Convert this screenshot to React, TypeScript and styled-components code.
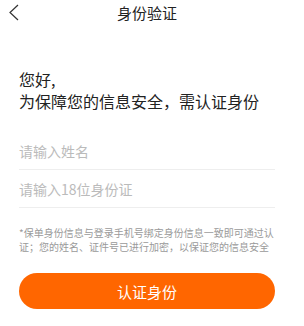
import styled, { createGlobalStyle } from "styled-components";

const GlobalStyle = createGlobalStyle`
  html, body {
    margin: 0;
    padding: 0;
    background: #fff;
  }
  body {
    font-family: "Noto Sans CJK SC", "Noto Sans", sans-serif;
  }
`;

const Page = styled.div`
  width: 294px;
  display: flex;
  flex-direction: column;
`;

const Header = styled.div`
  position: relative;
  height: 25px;
  display: flex;
  align-items: center;
  justify-content: center;
`;

const BackButton = styled.div`
  position: absolute;
  left: 8px;
  top: 4px;
  width: 12px;
  height: 18px;
  display: flex;
`;

const Title = styled.div`
  font-size: 15px;
  line-height: 25px;
  color: #222;
`;

const Content = styled.div`
  padding: 0 19px;
  display: flex;
  flex-direction: column;
`;

const Greeting = styled.div`
  margin-top: 43px;
  display: flex;
  flex-direction: column;
`;

const GreetingLine = styled.div`
  font-size: 16px;
  line-height: 22px;
  color: #222;
`;

const Form = styled.div`
  margin-top: 20px;
  display: flex;
  flex-direction: column;
`;

const Field = styled.input`
  height: 37px;
  border: none;
  border-bottom: 1px solid #eeeeee;
  padding: 0;
  margin: 0;
  outline: none;
  font-family: inherit;
  font-size: 14px;
  color: #333;
  background: transparent;
  &::placeholder {
    color: #bbbbbb;
  }
`;

const Note = styled.p`
  margin: 18px 0 0;
  font-size: 10px;
  line-height: 14px;
  color: #9a9a9a;
`;

const SubmitButton = styled.button`
  margin-top: 19px;
  height: 36px;
  border: none;
  border-radius: 18px;
  background: #ff6600;
  color: #fff;
  font-family: inherit;
  font-size: 15px;
  cursor: pointer;
`;

const ChevronLeft = () => (
  <svg width="12" height="18" viewBox="0 0 12 18">
    <polyline
      points="10,1 2,8.5 10,16"
      fill="none"
      stroke="#333"
      strokeWidth="1.2"
    />
  </svg>
);

const App = () => {
  return (
    <>
      <GlobalStyle />
      <Page>
        <Header>
          <BackButton>
            <ChevronLeft />
          </BackButton>
          <Title>身份验证</Title>
        </Header>
        <Content>
          <Greeting>
            <GreetingLine>您好,</GreetingLine>
            <GreetingLine>为保障您的信息安全，需认证身份</GreetingLine>
          </Greeting>
          <Form>
            <Field placeholder="请输入姓名" />
            <Field placeholder="请输入18位身份证" />
          </Form>
          <Note>
            *保单身份信息与登录手机号绑定身份信息一致即可通过认证；您的姓名、证件号已进行加密，以保证您的信息安全
          </Note>
          <SubmitButton>认证身份</SubmitButton>
        </Content>
      </Page>
    </>
  );
};

export default App;
